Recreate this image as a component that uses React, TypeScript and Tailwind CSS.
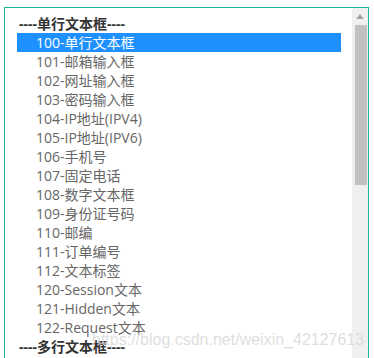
const options = [
  "100-单行文本框",
  "101-邮箱输入框",
  "102-网址输入框",
  "103-密码输入框",
  "104-IP地址(IPV4)",
  "105-IP地址(IPV6)",
  "106-手机号",
  "107-固定电话",
  "108-数字文本框",
  "109-身份证号码",
  "110-邮编",
  "111-订单编号",
  "112-文本标签",
  "120-Session文本",
  "121-Hidden文本",
  "122-Request文本",
];

const font = { fontFamily: '"Open Sans", "Noto Sans CJK SC", sans-serif' };

export default function App() {
  return (
    <div className="w-[374px] h-[358px] bg-white overflow-hidden pl-[4px] pt-[7px]">
      <div className="relative w-[365px] h-[400px] border border-[#1ab394] flex">
        {/* list */}
        <div className="flex-1 flex flex-col pl-[12px] pr-[11px] pt-[6px] text-[14px]" style={font}>
          <div className="h-[19px] leading-[19px] pl-[2px] font-bold text-[#333]">----单行文本框----</div>
          {options.map((o, i) => (
            <div
              key={o}
              className={
                i === 0
                  ? "h-[19px] leading-[19px] pl-[19px] bg-[#1e90ff] text-white"
                  : "h-[19px] leading-[19px] pl-[19px] text-[#666]"
              }
            >
              {o}
            </div>
          ))}
          <div className="h-[19px] leading-[19px] pl-[2px] font-bold text-[#333]">----多行文本框----</div>
        </div>

        {/* scrollbar */}
        <div className="w-[16px] bg-[#f0f0f0] flex flex-col items-center">
          <div className="h-[17px] w-full flex items-center justify-center">
            <svg width="8" height="5" viewBox="0 0 8 5">
              <path d="M4 0 L8 5 L0 5 Z" fill="#a3a3a3" />
            </svg>
          </div>
          <div className="w-[12px] h-[160px] bg-[#c1c1c1] ml-[1px]" />
        </div>

        {/* watermark */}
        <div
          className="absolute left-[87px] top-[323px] text-[16px] leading-[18px] text-[#d6d6d6]/80 whitespace-nowrap pointer-events-none"
          style={{ fontFamily: '"Liberation Sans", Arial, sans-serif' }}
        >
          https://blog.csdn.net/weixin_42127613
        </div>
      </div>
    </div>
  );
}
